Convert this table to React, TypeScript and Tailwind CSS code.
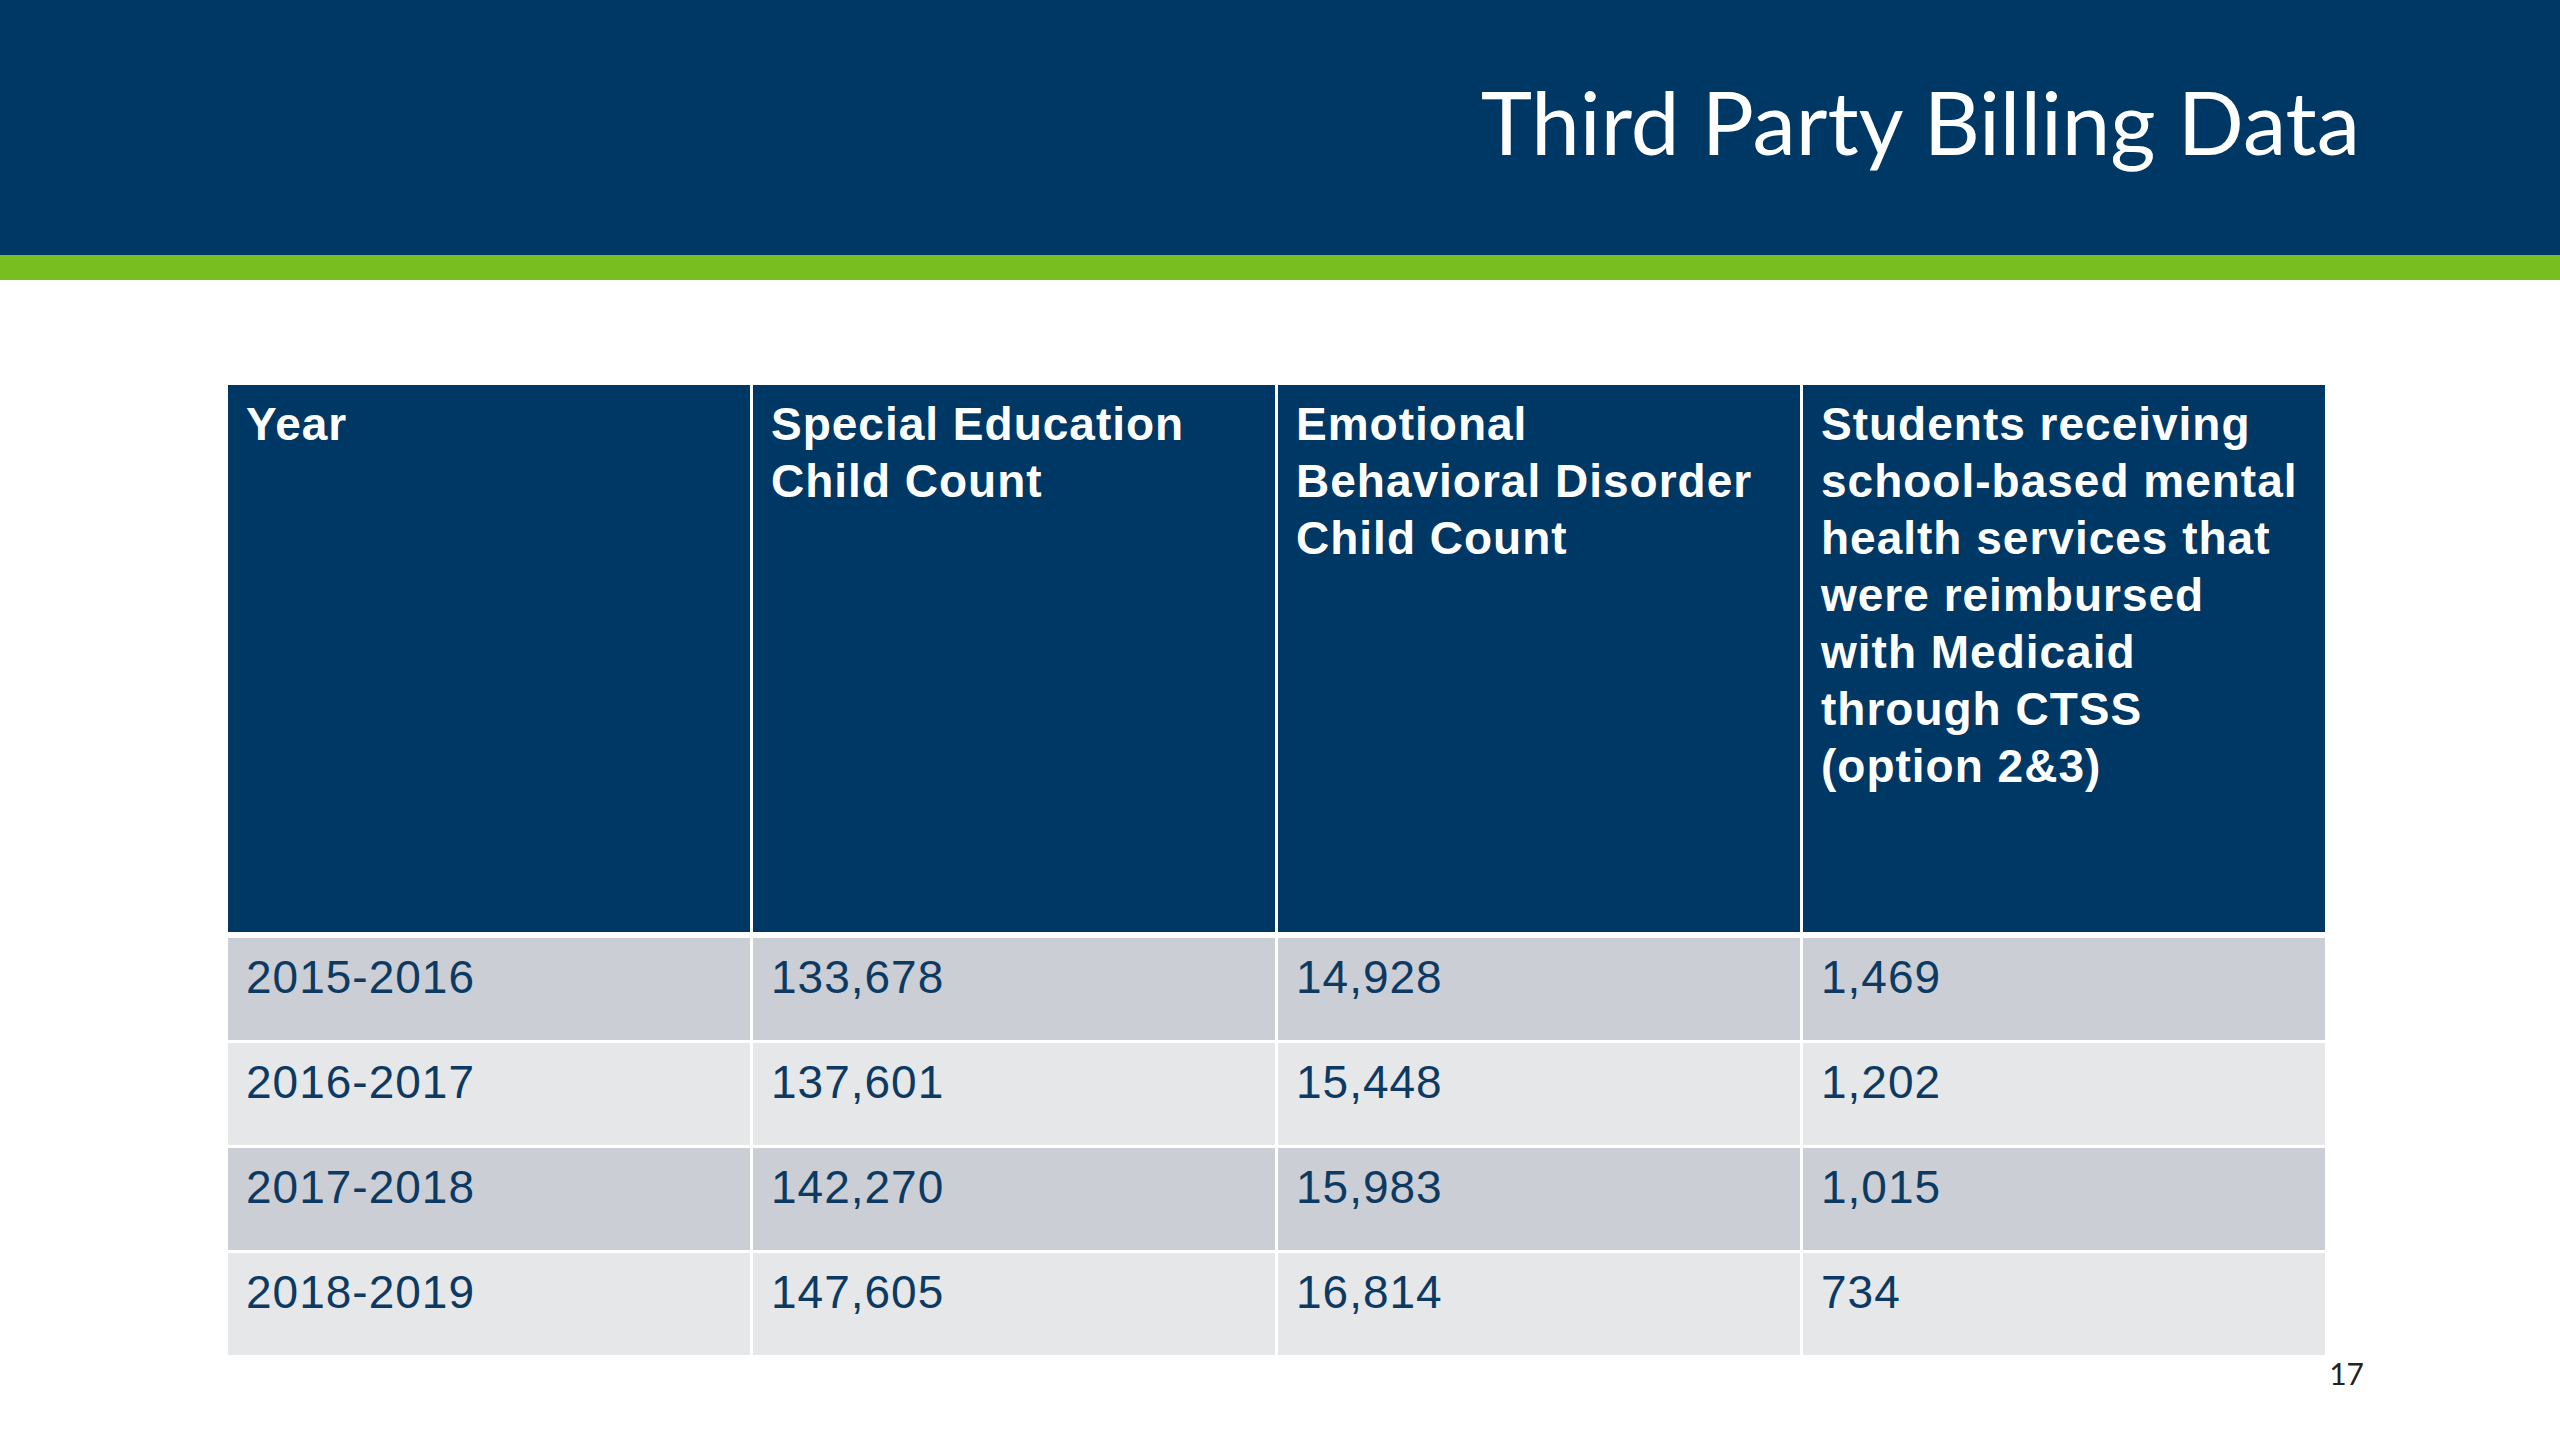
const headers = [
  ["Year"],
  ["Special Education", "Child Count"],
  ["Emotional", "Behavioral Disorder", "Child Count"],
  [
    "Students receiving",
    "school-based mental",
    "health services that",
    "were reimbursed",
    "with Medicaid",
    "through CTSS",
    "(option 2&3)",
  ],
];

const rows = [
  ["2015-2016", "133,678", "14,928", "1,469"],
  ["2016-2017", "137,601", "15,448", "1,202"],
  ["2017-2018", "142,270", "15,983", "1,015"],
  ["2018-2019", "147,605", "16,814", "734"],
];

export default function App() {
  return (
    <div className="min-h-[1440px] w-[2560px] bg-white">
      <header className="h-[255px] bg-[#003865] pr-[200px] pt-[78px] text-right">
        <h1 className="font-['Lato',sans-serif] text-[87px] leading-none text-white">
          Third Party Billing Data
        </h1>
      </header>
      <div className="h-[25px] bg-[#78be21]" />

      <div className="ml-[228px] mt-[105px] w-[2097px] font-['Liberation_Sans',Arial,sans-serif] tracking-[1px]">
        <div className="grid h-[547px] grid-cols-4 gap-[3px]">
          {headers.map((lines, i) => (
            <div
              key={i}
              className="bg-[#003865] pl-[18px] pt-[11px] text-[46px] font-bold leading-[57px] text-white"
            >
              {lines.map((l) => (
                <div key={l}>{l}</div>
              ))}
            </div>
          ))}
        </div>
        <div className="mt-[6px] flex flex-col gap-[3px]">
          {rows.map((r, ri) => (
            <div key={r[0]} className="grid h-[102px] grid-cols-4 gap-[3px]">
              {r.map((c, ci) => (
                <div
                  key={ci}
                  className={`pl-[18px] pt-[11px] text-[46px] leading-[57px] text-[#0c3a62] ${
                    ri % 2 === 0 ? "bg-[#cbced4]" : "bg-[#e6e7e9]"
                  }`}
                >
                  {c}
                </div>
              ))}
            </div>
          ))}
        </div>
      </div>

      <p className="mt-[3px] pr-[196px] text-right font-['Lato',sans-serif] text-[30px] leading-none text-[#222]">
        17
      </p>
    </div>
  );
}
